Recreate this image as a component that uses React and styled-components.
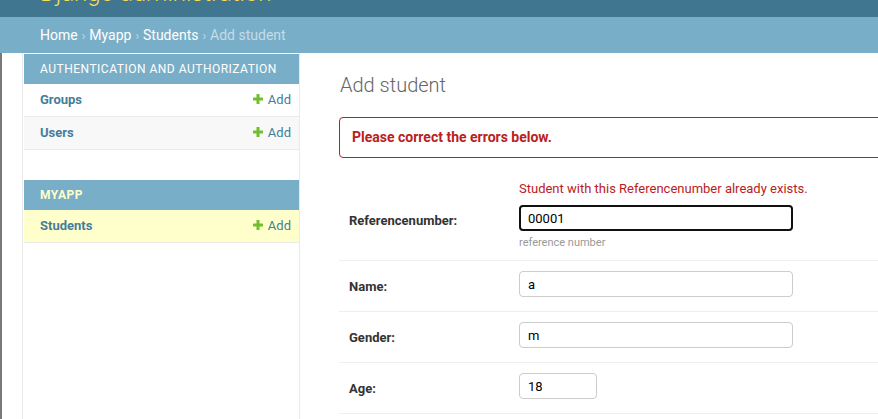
import styled, { createGlobalStyle } from "styled-components";

const GlobalStyle = createGlobalStyle`
    html, body {
        margin: 0;
        padding: 0;
        overflow: hidden;
        background: #ffffff;
        font-family: Roboto, "Liberation Sans", sans-serif;
        color: #333333;
    }
`;

const breadcrumbs = ["Home", "Myapp", "Students"];

const sections = [
    {
        name: "Authentication and Authorization",
        current: false,
        models: [{ name: "Groups" }, { name: "Users", alt: true }],
    },
    {
        name: "Myapp",
        current: true,
        models: [{ name: "Students", selected: true }],
    },
];

const fields = [
    { label: "Name", value: "a" },
    { label: "Gender", value: "m" },
    { label: "Age", value: "18", small: true },
];

function AddIcon() {
    return (
        <svg width="10" height="10" viewBox="0 0 10 10">
            <rect x="3.5" y="0" width="3" height="10" rx="0.6" fill="#70bf2b" />
            <rect x="0" y="3.5" width="10" height="3" rx="0.6" fill="#70bf2b" />
        </svg>
    );
}

export default function App() {
    return (
        <>
        <GlobalStyle />
        <Header>
            <Branding>Django administration</Branding>
        </Header>
        <Breadcrumbs>
            {breadcrumbs.map(item => (
                <span key={item}>
                    <Crumb>{item}</Crumb>
                    <Sep>›</Sep>
                </span>
            ))}
            <Current>Add student</Current>
        </Breadcrumbs>
        <Layout>
            <Toggle />
            <Sidebar>
                {sections.map(section => (
                    <Module key={section.name}>
                        <Caption current={section.current}>{section.name}</Caption>
                        {section.models.map(model => (
                            <ModelRow key={model.name} alt={model.alt} selected={model.selected}>
                                <ModelName>{model.name}</ModelName>
                                <AddLink><AddIcon />Add</AddLink>
                            </ModelRow>
                        ))}
                    </Module>
                ))}
            </Sidebar>
            <Main>
                <Title>Add student</Title>
                <ErrorNote>Please correct the errors below.</ErrorNote>
                <FormRow>
                    <ErrorList>Student with this Referencenumber already exists.</ErrorList>
                    <FieldLine>
                        <Label>Referencenumber:</Label>
                        <Input focused>00001</Input>
                    </FieldLine>
                    <Help>reference number</Help>
                </FormRow>
                {fields.map(field => (
                    <FormRow key={field.label}>
                        <FieldLine>
                            <Label>{field.label}:</Label>
                            <Input small={field.small}>{field.value}</Input>
                        </FieldLine>
                    </FormRow>
                ))}
            </Main>
        </Layout>
        </>
    );
}

const Header = styled.div`
    height: 17px;
    overflow: hidden;
    background-color: #417690;
    padding: 0 40px;
`;

const Branding = styled.div`
    margin-top: -19px;
    font-size: 24px;
    line-height: 24px;
    font-weight: 300;
    color: #f5dd5d;
`;

const Breadcrumbs = styled.div`
    height: 36px;
    box-sizing: border-box;
    padding: 9px 40px;
    background-color: #79aec8;
    font-size: 14px;
    line-height: 18px;
    color: #ffffff;
`;

const Crumb = styled.span`
    color: #ffffff;
`;

const Sep = styled.span`
    margin: 0 4px;
    font-size: 12px;
    color: #c4dce8;
`;

const Current = styled.span`
    color: #c4dce8;
`;

const Layout = styled.div`
    display: flex;
    min-height: calc(100vh - 53px);
`;

const Toggle = styled.div`
    flex: none;
    width: 20px;
    border-left: 2px solid #787878;
    border-right: 1px solid #eaeaea;
`;

const Sidebar = styled.div`
    flex: none;
    width: 275px;
    margin-left: 1px;
    padding-top: 1px;
    border-right: 1px solid #eaeaea;
    background: #ffffff;
`;

const Module = styled.div`
    margin-bottom: 30px;
`;

const Caption = styled.div`
    height: 30px;
    box-sizing: border-box;
    padding: 8px 16px;
    background-color: #79aec8;
    text-transform: uppercase;
    font-size: 12px;
    line-height: 15px;
    letter-spacing: 0.5px;
    font-weight: ${p => (p.current ? 700 : 400)};
    color: ${p => (p.current ? "#ffffcc" : "#ffffff")};
`;

const ModelRow = styled.div`
    height: 32px;
    box-sizing: border-box;
    display: flex;
    align-items: center;
    justify-content: space-between;
    padding: 0 8px 2px 16px;
    border-bottom: 1px solid #eaeaea;
    background: ${p => (p.selected ? "#ffffcc" : p.alt ? "#f8f8f8" : "#ffffff")};
    height: 33px;
`;

const ModelName = styled.span`
    font-size: 13px;
    font-weight: 700;
    color: #447e9b;
`;

const AddLink = styled.span`
    display: flex;
    align-items: center;
    gap: 5px;
    font-size: 13px;
    color: #447e9b;
`;

const Main = styled.div`
    flex: none;
    width: 620px;
    padding: 20px 0 0 39px;
`;

const Title = styled.h1`
    margin: 0 0 20px 1px;
    font-size: 20px;
    line-height: 24px;
    font-weight: 300;
    color: #666666;
`;

const ErrorNote = styled.div`
    margin-bottom: 13px;
    padding: 10px 12px;
    border: 1px solid #ba2121;
    border-radius: 4px;
    font-size: 14px;
    line-height: 19px;
    font-weight: 700;
    color: #ba2121;
`;

const FormRow = styled.div`
    padding: 10px 10px 14px;
    border-bottom: 1px solid #eeeeee;
`;

const ErrorList = styled.div`
    margin: 0 0 8px 170px;
    font-size: 13px;
    line-height: 16px;
    color: #ba2121;
`;

const FieldLine = styled.div`
    display: flex;
    align-items: center;
`;

const Label = styled.div`
    flex: none;
    width: 170px;
    padding-top: 5px;
    font-size: 13px;
    font-weight: 700;
    color: #333333;
`;

const Input = styled.div`
    box-sizing: border-box;
    width: ${p => (p.small ? "78px" : "274px")};
    height: 26px;
    padding: 0 ${p => (p.focused ? "7px" : "8px")};
    display: flex;
    align-items: center;
    border: ${p => (p.focused ? "2px solid #111111" : "1px solid #cccccc")};
    border-radius: 4px;
    font-size: 13px;
    color: #000000;
`;

const Help = styled.div`
    margin: 5px 0 -4px 170px;
    font-size: 11px;
    line-height: 14px;
    color: #999999;
`;
